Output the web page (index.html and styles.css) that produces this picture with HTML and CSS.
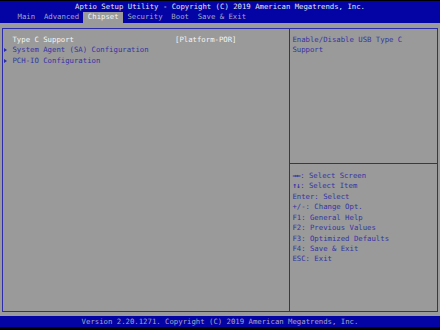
FILE: index.html
```html
<!DOCTYPE html>
<html lang="en">
<head>
    <meta charset="UTF-8">
    <title>Aptio Setup Utility</title>
    <link rel="stylesheet" href="styles.css">
</head>
<body>
    <div class="header">
        <div class="title">Aptio Setup Utility - Copyright (C) 2019 American Megatrends, Inc.</div>
        <div class="tabs">
            <span class="tab">Main</span>
            <span class="tab">Advanced</span>
            <span class="tab active">Chipset</span>
            <span class="tab">Security</span>
            <span class="tab">Boot</span>
            <span class="tab">Save &amp; Exit</span>
        </div>
    </div>
    <div class="main">
        <div class="frame">
            <div class="items">
                <div class="item selected">
                    <span class="arrow-cell"></span>
                    <span class="label">Type C Support</span>
                    <span class="value">[Platform-POR]</span>
                </div>
                <div class="item">
                    <span class="arrow-cell"><span class="arrow"></span></span>
                    <span class="label">System Agent (SA) Configuration</span>
                    <span class="value"></span>
                </div>
                <div class="item">
                    <span class="arrow-cell"><span class="arrow"></span></span>
                    <span class="label">PCH-IO Configuration</span>
                    <span class="value"></span>
                </div>
            </div>
            <div class="side">
                <div class="help-text">
                    <div class="line">Enable/Disable USB Type C</div>
                    <div class="line">Support</div>
                </div>
                <div class="keys">
                    <div class="line"><span class="glyph">&rarr;&larr;</span>: Select Screen</div>
                    <div class="line"><span class="glyph">&uarr;&darr;</span>: Select Item</div>
                    <div class="line">Enter: Select</div>
                    <div class="line">+/-: Change Opt.</div>
                    <div class="line">F1: General Help</div>
                    <div class="line">F2: Previous Values</div>
                    <div class="line">F3: Optimized Defaults</div>
                    <div class="line">F4: Save &amp; Exit</div>
                    <div class="line">ESC: Exit</div>
                </div>
            </div>
        </div>
    </div>
    <div class="footer">Version 2.20.1271. Copyright (C) 2019 American Megatrends, Inc.</div>
</body>
</html>
```

FILE: styles.css
```css
body {
    margin: 0;
    padding-top: 1px;
    height: 329px;
    background: #000;
    font-family: "DejaVu Sans Mono", monospace;
    font-size: 7.31px;
    line-height: 10.45px;
    overflow: hidden;
}
.header {
    background: #0404a4;
    height: 22.2px;
}
.title {
    height: 10.45px;
    padding-top: 1px;
    box-sizing: border-box;
    text-align: center;
    color: #e4e4ec;
    white-space: pre;
}
.tabs {
    display: flex;
    height: 10.45px;
    padding-left: 3ch;
    margin-top: 0.8px;
}
.tab {
    padding: 0 1ch;
    color: #a4a4c4;
    white-space: pre;
}
.tab.active {
    background: #9a9a9a;
    color: #f4f4f4;
}
.main {
    background: #9a9a9a;
    height: 293.3px;
    box-sizing: border-box;
    padding: 4.8px 2.2px 4.8px 2px;
}
.frame {
    display: grid;
    grid-template-columns: 287.3px 1fr;
    height: 100%;
    box-sizing: border-box;
    border: 1.7px solid #2c2ca8;
}
.items {
    border-right: 1.7px solid #2c2ca8;
    padding: 5.8px 0 0 0.7px;
    color: #3434a4;
}
.item {
    display: grid;
    grid-template-columns: 2ch 37ch 1fr;
    height: 10.45px;
    white-space: pre;
}
.item.selected {
    color: #f4f4f4;
}
.arrow-cell {
    display: flex;
    align-items: center;
}
.arrow {
    width: 0;
    height: 0;
    border-left: 3.2px solid #2c2ca8;
    border-top: 2.2px solid transparent;
    border-bottom: 2.2px solid transparent;
}
.side {
    display: grid;
    grid-template-rows: 135.4px 1fr;
    color: #3434a4;
}
.help-text {
    border-bottom: 1.7px solid #2c2ca8;
    padding: 5.8px 0 0 2.1px;
}
.keys {
    padding: 6.6px 0 0 2.1px;
}
.line {
    height: 10.45px;
    white-space: pre;
}
.glyph {
    font-weight: bold;
    letter-spacing: -0.5px;
}
.footer {
    background: #0404a4;
    height: 10.45px;
    padding-top: 0.8px;
    box-sizing: border-box;
    text-align: center;
    color: #a4a4c4;
    white-space: pre;
}
```
